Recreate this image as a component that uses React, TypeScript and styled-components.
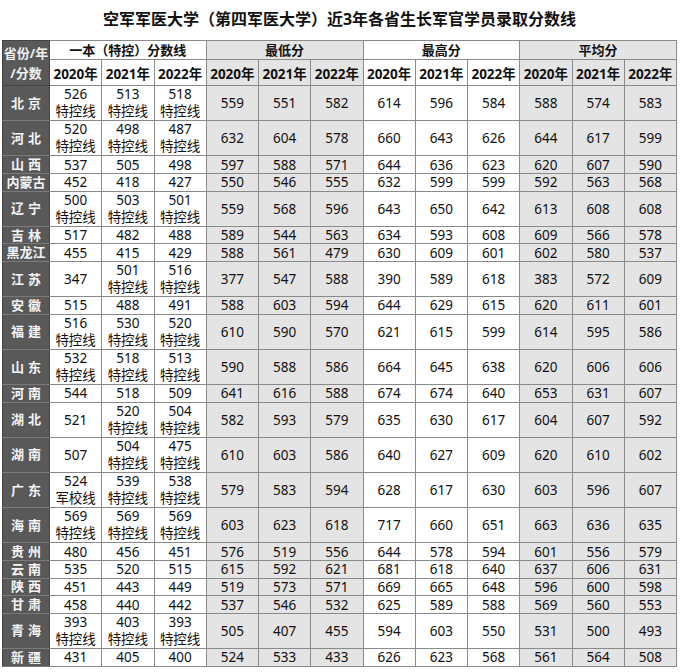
import styled, { createGlobalStyle } from "styled-components";

const GlobalStyle = createGlobalStyle`
  body {
    margin: 0;
    background: #ffffff;
    font-family: "Noto Sans", "Noto Sans CJK SC", sans-serif;
  }
`;

const Page = styled.div`
  width: 680px;
  height: 672px;
  padding: 0 3px 0 2px;
  box-sizing: border-box;
  overflow: hidden;
`;

const Title = styled.div`
  height: 40px;
  display: flex;
  align-items: center;
  justify-content: center;
  padding-bottom: 4px;
  box-sizing: border-box;
  font-size: 16px;
  font-weight: 700;
  color: #111;
`;

const Table = styled.table`
  width: 675px;
  border-collapse: collapse;
  table-layout: fixed;
  border: 1px solid #555;
  font-size: 13.5px;
  color: #111;
`;

const Corner = styled.th`
  background: #595959;
  color: #f0f0f0;
  font-weight: 700;
  font-size: 13px;
  line-height: 20px;
  border: 1px solid #444;
  text-align: center;
  padding: 0;
`;

const GroupHead = styled.th<{ $shade?: boolean }>`
  background: ${(p) => (p.$shade ? "#e4e4e4" : "#ffffff")};
  font-weight: 700;
  font-size: 13px;
  height: 18px;
  padding: 0;
  border: 1px solid #8a8a8a;
  line-height: 16px;
`;

const YearHead = styled.th<{ $shade?: boolean }>`
  background: ${(p) => (p.$shade ? "#e4e4e4" : "#ffffff")};
  font-weight: 700;
  font-size: 13.5px;
  height: 25px;
  padding: 0;
  border: 1px solid #8a8a8a;
`;

const Row = styled.tr<{ $tall?: boolean }>`
  height: ${(p) => (p.$tall ? "35.2px" : "17.6px")};
`;

const Province = styled.th<{ $tight?: boolean }>`
  background: #595959;
  color: #f4f4f4;
  font-weight: 700;
  font-size: 13px;
  letter-spacing: ${(p) => (p.$tight ? "0" : "4px")};
  text-indent: ${(p) => (p.$tight ? "0" : "4px")};
  border: 1px solid #444;
  border-bottom-color: #7a7a7a;
  padding: 0;
  line-height: 15px;
`;

const Cell = styled.td<{ $shade?: boolean }>`
  background: ${(p) => (p.$shade ? "#e4e4e4" : "#ffffff")};
  text-align: center;
  padding: 0;
  line-height: 16px;
  border: 1px solid #8a8a8a;
`;

const Value = styled.span`
  display: block;
  line-height: 17px;
`;

const Note = styled.span`
  display: block;
  line-height: 17px;
`;

type Entry = {
  name: string;
  line: [string, string, string];
  notes?: [string, string, string];
  min: [number, number, number];
  max: [number, number, number];
  avg: [number, number, number];
};

const T = "特控线";

const data: Entry[] = [
  { name: "北京", line: ["526", "513", "518"], notes: [T, T, T], min: [559, 551, 582], max: [614, 596, 584], avg: [588, 574, 583] },
  { name: "河北", line: ["520", "498", "487"], notes: [T, T, T], min: [632, 604, 578], max: [660, 643, 626], avg: [644, 617, 599] },
  { name: "山西", line: ["537", "505", "498"], min: [597, 588, 571], max: [644, 636, 623], avg: [620, 607, 590] },
  { name: "内蒙古", line: ["452", "418", "427"], min: [550, 546, 555], max: [632, 599, 599], avg: [592, 563, 568] },
  { name: "辽宁", line: ["500", "503", "501"], notes: [T, T, T], min: [559, 568, 596], max: [643, 650, 642], avg: [613, 608, 608] },
  { name: "吉林", line: ["517", "482", "488"], min: [589, 544, 563], max: [634, 593, 608], avg: [609, 566, 578] },
  { name: "黑龙江", line: ["455", "415", "429"], min: [588, 561, 479], max: [630, 609, 601], avg: [602, 580, 537] },
  { name: "江苏", line: ["347", "501", "516"], notes: ["", T, T], min: [377, 547, 588], max: [390, 589, 618], avg: [383, 572, 609] },
  { name: "安徽", line: ["515", "488", "491"], min: [588, 603, 594], max: [644, 629, 615], avg: [620, 611, 601] },
  { name: "福建", line: ["516", "530", "520"], notes: [T, T, T], min: [610, 590, 570], max: [621, 615, 599], avg: [614, 595, 586] },
  { name: "山东", line: ["532", "518", "513"], notes: [T, T, T], min: [590, 588, 586], max: [664, 645, 638], avg: [620, 606, 606] },
  { name: "河南", line: ["544", "518", "509"], min: [641, 616, 588], max: [674, 674, 640], avg: [653, 631, 607] },
  { name: "湖北", line: ["521", "520", "504"], notes: ["", T, T], min: [582, 593, 579], max: [635, 630, 617], avg: [604, 607, 592] },
  { name: "湖南", line: ["507", "504", "475"], notes: ["", T, T], min: [610, 603, 586], max: [640, 627, 609], avg: [620, 610, 602] },
  { name: "广东", line: ["524", "539", "538"], notes: ["军校线", T, T], min: [579, 583, 594], max: [628, 617, 630], avg: [603, 596, 607] },
  { name: "海南", line: ["569", "569", "569"], notes: [T, T, T], min: [603, 623, 618], max: [717, 660, 651], avg: [663, 636, 635] },
  { name: "贵州", line: ["480", "456", "451"], min: [576, 519, 556], max: [644, 578, 594], avg: [601, 556, 579] },
  { name: "云南", line: ["535", "520", "515"], min: [615, 592, 621], max: [681, 618, 640], avg: [637, 606, 631] },
  { name: "陕西", line: ["451", "443", "449"], min: [519, 573, 571], max: [669, 665, 648], avg: [596, 600, 598] },
  { name: "甘肃", line: ["458", "440", "442"], min: [537, 546, 532], max: [625, 589, 588], avg: [569, 560, 553] },
  { name: "青海", line: ["393", "403", "393"], notes: [T, T, T], min: [505, 407, 455], max: [594, 603, 550], avg: [531, 500, 493] },
  { name: "新疆", line: ["431", "405", "400"], min: [524, 533, 433], max: [626, 623, 568], avg: [561, 564, 508] },
];

const groups = [
  { label: "一本（特控）分数线", shade: false },
  { label: "最低分", shade: true },
  { label: "最高分", shade: false },
  { label: "平均分", shade: true },
];

const years = ["2020年", "2021年", "2022年"];

export default function App() {
  return (
    <>
      <GlobalStyle />
      <Page>
        <Title>空军军医大学（第四军医大学）近3年各省生长军官学员录取分数线</Title>
        <Table>
          <colgroup>
            <col style={{ width: 47 }} />
            {Array.from({ length: 12 }).map((_, i) => (
              <col key={i} />
            ))}
          </colgroup>
          <thead>
            <tr>
              <Corner rowSpan={2}>
                省份/年
                <br />
                /分数
              </Corner>
              {groups.map((g) => (
                <GroupHead key={g.label} colSpan={3} $shade={g.shade}>
                  {g.label}
                </GroupHead>
              ))}
            </tr>
            <tr>
              {groups.map((g) =>
                years.map((y) => (
                  <YearHead key={g.label + y} $shade={g.shade}>
                    {y}
                  </YearHead>
                ))
              )}
            </tr>
          </thead>
          <tbody>
            {data.map((d) => {
              const tall = !!d.notes;
              return (
                <Row key={d.name} $tall={tall}>
                  <Province $tight={d.name.length > 2}>{d.name}</Province>
                  {d.line.map((v, i) => (
                    <Cell key={"l" + i}>
                      {d.notes && d.notes[i] ? (
                        <>
                          <Value>{v}</Value>
                          <Note>{d.notes[i]}</Note>
                        </>
                      ) : (
                        v
                      )}
                    </Cell>
                  ))}
                  {d.min.map((v, i) => (
                    <Cell key={"a" + i} $shade>
                      {v}
                    </Cell>
                  ))}
                  {d.max.map((v, i) => (
                    <Cell key={"b" + i}>{v}</Cell>
                  ))}
                  {d.avg.map((v, i) => (
                    <Cell key={"c" + i} $shade>
                      {v}
                    </Cell>
                  ))}
                </Row>
              );
            })}
          </tbody>
        </Table>
      </Page>
    </>
  );
}
